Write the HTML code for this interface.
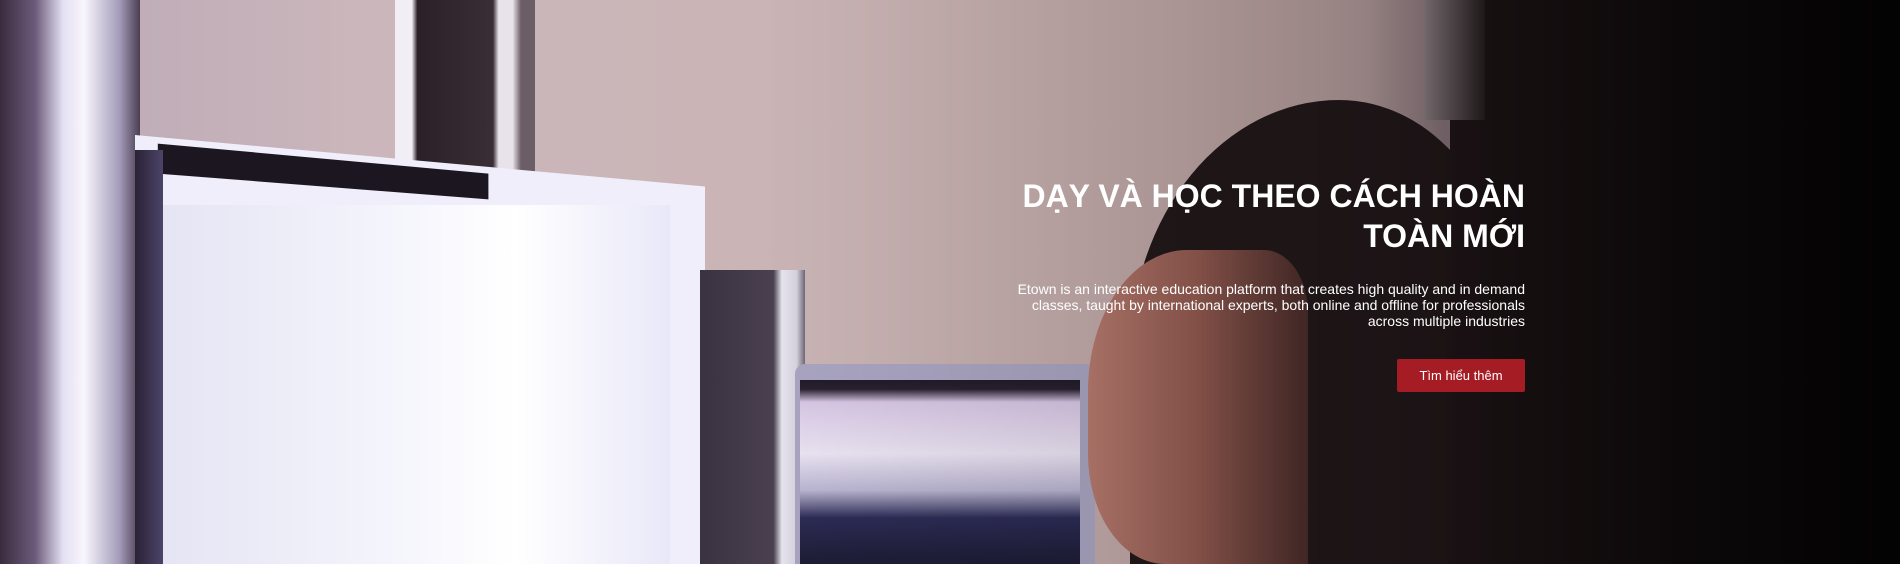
<!DOCTYPE html>
<html><head><meta charset="utf-8"><style>
html,body{margin:0;padding:0}
body{width:1900px;height:564px;overflow:hidden;position:relative;background:#c4aeb2;font-family:"Liberation Sans",sans-serif}
.a{position:absolute}
</style></head><body>
<div class="a" style="left:0;top:0;width:1900px;height:564px;background:linear-gradient(90deg,#b9a7b6 0,#cbb7bb 20%,#c9b3b4 45%,#bfa7a6 62%,#b39b9b 72%,#8e7a80 76%)"></div>
<div class="a" style="left:0;top:0;width:140px;height:564px;background:linear-gradient(90deg,#3a2c3e,#6b5a7a 25%,#e4e0f2 45%,#f8f6fd 60%,#a59dbb 85%,#4a3e52)"></div>
<div class="a" style="left:395px;top:0;width:140px;height:175px;background:linear-gradient(90deg,#f2eef6 0,#f2eef6 12%,#2a2026 16%,#3a2e35 70%,#e8e2ea 74%,#e8e2ea 84%,#6c5e66 90%)"></div>
<div class="a" style="left:135px;top:135px;width:570px;height:429px;background:#f0eefa;clip-path:polygon(0 0,100% 12%,100% 100%,0 100%)"></div>
<div class="a" style="left:135px;top:135px;width:570px;height:429px;background:#1c1620;clip-path:polygon(4% 2%,62% 9%,62% 15%,4% 9%)"></div>
<div class="a" style="left:155px;top:205px;width:515px;height:359px;background:linear-gradient(90deg,#e4e4f4,#f6f6fd 50%,#ffffff 70%,#e9e8f8)"></div>
<div class="a" style="left:135px;top:150px;width:28px;height:414px;background:linear-gradient(90deg,#2a2236,#4c4468)"></div>
<div class="a" style="left:700px;top:270px;width:105px;height:294px;background:linear-gradient(90deg,#3a3240,#4a4050 70%,#e6e4ee 78%,#d6d2de 92%,#6e6678)"></div>
<div class="a" style="left:795px;top:364px;width:300px;height:200px;background:#a9a4c0;border-radius:10px 10px 0 0"></div>
<div class="a" style="left:800px;top:380px;width:280px;height:184px;background:linear-gradient(180deg,#201c28 0,#2a2030 5%,#d7c6e4 12%,#eae3f2 40%,#b9b4d0 60%,#2c2b55 75%,#1c1c34)"></div>
<div class="a" style="left:1130px;top:100px;width:380px;height:464px;background:#22181a;border-radius:55% 45% 0 0"></div>
<div class="a" style="left:1088px;top:250px;width:220px;height:314px;background:linear-gradient(90deg,#b67a6e,#925a50 50%,#4a2c2a);border-radius:45% 20% 0 35%"></div>
<div class="a" style="left:1450px;top:0;width:450px;height:564px;background:linear-gradient(90deg,#201618,#160f11 40%,#070506)"></div>
<div class="a" style="left:1425px;top:0;width:60px;height:120px;background:linear-gradient(90deg,#8d8286,#2a2022)"></div>
<div class="a" style="left:0;top:0;width:1900px;height:564px;background:linear-gradient(90deg,rgba(0,0,0,0) 40%,rgba(0,0,0,.15) 70%,rgba(0,0,0,.5))"></div>
<div class="a" style="left:960px;top:176px;width:565px;text-align:right;color:#fff;font-weight:bold;font-size:32px;line-height:40px">DẠY VÀ HỌC THEO CÁCH HOÀN<br>TOÀN MỚI</div>
<div class="a" style="left:960px;top:281px;width:565px;text-align:right;color:#fff;font-size:14px;line-height:16px">Etown is an interactive education platform that creates high quality and in demand<br>classes, taught by international experts, both online and offline for professionals<br>across multiple industries</div>
<div class="a" style="left:1397px;top:359px;width:128px;height:33px;background:#a51c24;border-radius:2px;color:#fff;font-size:13px;line-height:33px;text-align:center">Tìm hiểu thêm</div>
</body></html>
